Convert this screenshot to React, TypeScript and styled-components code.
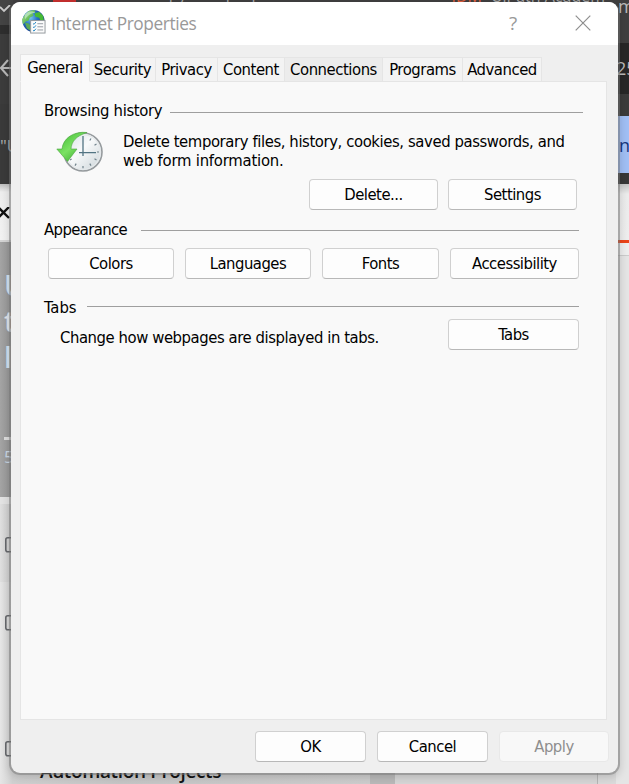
import React from 'react';
import styled, { createGlobalStyle } from 'styled-components';

const GlobalStyle = createGlobalStyle`
  *, *::before, *::after { box-sizing: border-box; }
  body { margin: 0; overflow: hidden; }
`;

const Desktop = styled.div`
  position: relative;
  width: 629px;
  height: 784px;
  overflow: hidden;
  background: #3c3c3c;
  font-family: "DejaVu Sans Condensed", "DejaVu Sans", sans-serif;
`;

/* Browser window visible around the dialog */
const Backdrop = styled.div`
  display: grid;
  grid-template-columns: 13px 1fr 13px;
  height: 784px;
`;

const Strip = styled.div`
  display: flex;
  flex-direction: column;
  overflow: hidden;
`;

const Block = styled.div<{ $h: number; $bg: string; $pad?: string }>`
  flex: none;
  height: ${(p) => p.$h}px;
  padding: ${(p) => p.$pad ?? '0'};
  background: ${(p) => p.$bg};
  overflow: hidden;
  white-space: nowrap;
`;

const Glimpse = styled.div<{ $size: number; $color: string; $bold?: boolean; $line?: number }>`
  font-family: "Open Sans", sans-serif;
  font-size: ${(p) => p.$size}px;
  line-height: ${(p) => p.$line ?? p.$size}px;
  font-weight: ${(p) => (p.$bold ? 600 : 400)};
  color: ${(p) => p.$color};
`;

const Middle = styled.div`
  display: flex;
  flex-direction: column;
  justify-content: space-between;
  overflow: hidden;
`;

const TopSliver = styled.div`
  display: flex;
  height: 10px;
  padding-left: 40px;
  background: #403f40;
  overflow: hidden;
`;

const RedTab = styled.div`
  width: 23px;
  height: 3px;
  background: #c9302f;
`;

const SliverText = styled.div<{ $ml: number; $color: string; $up?: number }>`
  margin: -${(p) => p.$up ?? 15}px 0 0 ${(p) => p.$ml}px;
  font: 16px/18px "Open Sans", sans-serif;
  color: ${(p) => p.$color};
  white-space: nowrap;
`;

const BottomSliver = styled.div`
  display: grid;
  grid-template-columns: 357px 25px 202px 1fr;
  height: 22px;
  overflow: hidden;
  background: #d9d9d9;
`;

const PageText = styled.div`
  padding-left: 27px;
  font: 600 19px/18px "Open Sans", sans-serif;
  letter-spacing: -0.38px;
  color: #141414;
  white-space: nowrap;
  background: linear-gradient(90deg, #d0d0d0, #c6c6c6 30%, #cdcdcd);
`;

const Patch = styled.div<{ $bg: string; $line?: boolean }>`
  background: ${(p) => p.$bg};
  border-left: ${(p) => (p.$line ? '1px solid #b5b5b5' : '0')};
`;

/* Dialog window */
const Dialog = styled.div`
  position: absolute;
  left: 11px;
  top: 2px;
  width: 607px;
  height: 771px;
  display: flex;
  flex-direction: column;
  border-radius: 9px;
  background: #efefef;
  overflow: hidden;
`;

const DialogEdge = styled.div`
  position: absolute;
  left: 9px;
  top: 2px;
  width: 611px;
  height: 773px;
  border-radius: 11px;
  background: rgba(110, 110, 110, 0.55);
  box-shadow: 0 2px 9px rgba(0, 0, 0, 0.16);
`;

const TitleBar = styled.header`
  flex: none;
  display: flex;
  align-items: center;
  height: 43px;
  padding: 0 27px 0 11px;
  background: #fff;
`;

const Title = styled.h1`
  flex: 1;
  margin: 0 0 0 5px;
  font: 400 17.3px/24px "Open Sans", sans-serif;
  letter-spacing: -0.4px;
  color: #999;
  padding-top: 1px;
`;

const HelpButton = styled.button`
  width: 20px;
  margin: 0 52px 2px 0;
  padding: 0;
  border: 0;
  background: none;
  font: 400 19px/24px "Open Sans", sans-serif;
  color: #999;
`;

const CloseButton = styled.button`
  display: flex;
  padding: 0 0 1px;
  border: 0;
  background: none;
`;

const TabList = styled.nav`
  flex: none;
  display: flex;
  align-items: flex-end;
  height: 37px;
  margin: 0 0 -1px 9px;
  z-index: 1;
`;

const Tab = styled.button<{ $w: number; $active?: boolean; $shade?: boolean }>`
  width: ${(p) => p.$w}px;
  height: ${(p) => (p.$active ? 28 : 25)}px;
  padding: ${(p) => (p.$active ? '0' : '1px 0 0')};
  border: 1px solid #e5e5e5;
  border-left-width: ${(p) => (p.$active ? 1 : 0)}px;
  border-bottom-color: ${(p) => (p.$active ? '#f9f9f9' : '#e5e5e5')};
  background: ${(p) => (p.$active ? '#f9f9f9' : p.$shade ? '#ececec' : '#f3f3f3')};
  font: 16.5px/22px "DejaVu Sans Condensed", sans-serif;
  letter-spacing: -0.45px;
  color: #000;
  white-space: nowrap;
`;

const Panel = styled.main`
  flex: none;
  width: 587px;
  height: 639px;
  margin-left: 9px;
  padding: 18px 23px 0;
  border: 1px solid #e5e5e5;
  background: #f9f9f9;
`;

const SectionHead = styled.div<{ $w: number; $right: number; $drop: number }>`
  display: grid;
  grid-template-columns: ${(p) => p.$w}px 1fr;
  height: 22px;
  margin-right: ${(p) => p.$right}px;
  &::after {
    content: '';
    height: 1px;
    margin-top: ${(p) => p.$drop}px;
    background: #9f9f9f;
  }
`;

const Text = styled.span<{ $ls?: number }>`
  font-size: 16.5px;
  line-height: 19px;
  letter-spacing: ${(p) => p.$ls ?? -0.4}px;
  color: #000;
  white-space: pre;
`;

const Heading = styled(Text).attrs({ as: 'h2' })`
  margin: 0;
  padding-top: 1px;
  font-weight: 400;
`;

const HistoryRow = styled.div`
  display: flex;
  height: 57px;
  padding: 9px 0 0 12px;
`;

const HistoryText = styled.div`
  display: flex;
  flex-direction: column;
  margin-left: 18px;
  padding: 1px 0 0 1px;
`;

const HistoryActions = styled.div`
  display: flex;
  gap: 10px;
  height: 40px;
  padding-left: 265px;
`;

const AppearanceActions = styled.div`
  display: flex;
  gap: 11px;
  height: 56px;
  padding: 7px 0 0 4px;
`;

const TabsRow = styled.div`
  display: flex;
  justify-content: space-between;
  width: 535px;
  padding-left: 16px;
`;

const Lowered = styled.div`
  padding-top: 9px;
`;

const Button = styled.button<{ $w: number }>`
  flex: none;
  width: ${(p) => p.$w}px;
  height: 31px;
  padding: 1px 0 0;
  border: 1px solid #d0d0d0;
  border-bottom-color: #b8b8b8;
  border-radius: 4px;
  background: #fdfdfd;
  font: 16.5px/20px "DejaVu Sans Condensed", sans-serif;
  letter-spacing: -0.5px;
  color: #000;
  &:disabled {
    border-color: #e8e8e8;
    background: #f8f8f8;
    color: #8e8e8e;
  }
`;

const Footer = styled.footer`
  display: flex;
  justify-content: flex-end;
  gap: 11px;
  padding: 11px 9px 0 0;
`;

const GlobeSvg = styled.svg`
  flex: none;
  margin-bottom: 4px;
`;

const GlobeIcon = () => (
  <GlobeSvg width="24" height="24" viewBox="0 0 25 25">
    <defs>
      <radialGradient id="sea" cx="35%" cy="35%" r="70%">
        <stop offset="0" stopColor="#79c8ee" />
        <stop offset="0.45" stopColor="#2872c5" />
        <stop offset="1" stopColor="#102f83" />
      </radialGradient>
      <linearGradient id="land" x2="1" y2="1">
        <stop stopColor="#bce79b" /><stop offset="1" stopColor="#239b28" />
      </linearGradient>
    </defs>
    <circle cx="12" cy="11.500" r="11.500" fill="url(#sea)" />
    <path d="M3 5 7 1l6-1 1 2-3 2 1 2-4 2-1 3-3 1-3 3-1-5z" fill="url(#land)" />
    <path d="m14 3 4-1 4 4 1 6-4-1-1-3-4-1-1-3z" fill="#46b936" />
    <path d="m3 13 4 1 3 3-1 5-4-3z" fill="#5aa856" />
    <path d="M3 5c3-4 8-4 11-2-4 0-8 2-11 7z" fill="#d6f1e7" opacity=".55" />
    <rect x="9" y="11" width="15" height="13" fill="#fbfbfb" stroke="#92979c" />
    <path d="M16 14.300h6M16 17.500h6M16 20.800h6" stroke="#9298a0" />
    <path d="m11.500 14 1 1 2-2.500m-3 5 1 1 2-2.500m-3 5 1 1 2-2.500" fill="none" stroke="#2386c6" />
  </GlobeSvg>
);

const HistoryIcon = () => (
  <svg width="48" height="42" viewBox="0 0 48 42">
    <defs>
      <linearGradient id="face" x2="1" y2="1">
        <stop stopColor="#d3dce2" /><stop offset=".45" stopColor="#f8fafb" /><stop offset="1" stopColor="#c9d2d6" />
      </linearGradient>
      <linearGradient id="arrow" x2="0.8" y2="1">
        <stop stopColor="#3bb631" /><stop offset=".55" stopColor="#7be263" /><stop offset="1" stopColor="#36a82e" />
      </linearGradient>
    </defs>
    <circle cx="27" cy="21" r="19" fill="url(#face)" stroke="#969b9e" strokeWidth="1.6" />
    <circle cx="27" cy="21" r="17.4" fill="none" stroke="#e4e8ea" strokeWidth="1.2" />
    <path d="M35 7.5l-1.2 2M40.5 13l-2 1.2M43 21h-2M40.5 29l-2-1.2M35 34.6l-1.2-2M27 37.2v-2.3M19 34.6l1.2-2M14 29l1.6-1" stroke="#71838c" strokeWidth="1.2" />
    <path d="M27 5v20M23 21.6h17" stroke="#527483" strokeWidth="1.3" />
    <path d="M31 1.5C18 0 7 7 6 18H.8L11.5 30.5 21 18h-6C15.5 10.5 20 5 31 1.5z" fill="url(#arrow)" stroke="#4ba53f" strokeWidth=".6" />
  </svg>
);

const CloseIcon = () => (
  <svg width="16" height="16" viewBox="0 0 16 16">
    <path d="m.7.7 14.6 14.6M15.3.7.7 15.3" stroke="#8e8e8e" strokeWidth="1.2" fill="none" />
  </svg>
);

const BackIcon = () => (
  <svg width="12" height="20" viewBox="0 0 12 20">
    <path d="M8 2 1 10l7 8M1 10h11" fill="none" stroke="#b8b8b8" strokeWidth="2" />
  </svg>
);

const ChevronIcon = () => (
  <svg width="12" height="10" viewBox="0 0 12 10">
    <path d="m0 2 4 4 6-6" fill="none" stroke="#ccc" strokeWidth="1.8" />
  </svg>
);

const CrossIcon = () => (
  <svg width="12" height="12" viewBox="0 0 12 12">
    <path d="m-2 0 11 11M9 0-2 11" stroke="#111" strokeWidth="2.4" />
  </svg>
);

const CheckIcon = () => (
  <svg width="13" height="16" viewBox="0 0 13 16">
    <rect x="5.8" y=".8" width="14" height="14" rx="2" fill="none" stroke="#66686c" strokeWidth="1.6" />
  </svg>
);

const tabs = [
  { label: 'General', w: 70, active: true },
  { label: 'Security', w: 66 },
  { label: 'Privacy', w: 62 },
  { label: 'Content', w: 67 },
  { label: 'Connections', w: 98, shade: true },
  { label: 'Programs', w: 80 },
  { label: 'Advanced', w: 79 },
];

export default function App() {
  return (
    <Desktop>
      <GlobalStyle />
      <Backdrop>
        <Strip>
          <Block $h={25} $bg="#444"><ChevronIcon /></Block>
          <Block $h={9} $bg="#2e2e2e" />
          <Block $h={70} $bg="#3c3c3c" $pad="24px 0 0"><BackIcon /></Block>
          <Block $h={80} $bg="#3a3a3a" $pad="32px 0 0"><Glimpse $size={17} $line={20} $color="#aaa">"U</Glimpse></Block>
          <Block $h={56} $bg="linear-gradient(#bdbdbd, #eee 8px, #f2f2f2)" $pad="20px 0 0"><CrossIcon /></Block>
          <Block $h={2} $bg="#d4d4d4" />
          <Block $h={255} $bg="linear-gradient(90deg, #a4a4a4, #949494)" $pad="25px 0 0 4px">
            <Glimpse $size={29} $line={36} $color="#d3e3f1" $bold>U</Glimpse>
            <Glimpse $size={29} $line={36} $color="#e0e5ea" $bold>t</Glimpse>
            <Glimpse $size={29} $line={36} $color="#d3e3f1" $bold>l</Glimpse>
            <Block $h={62} $bg="transparent" />
            <Block $h={3} $bg="#ddd" />
            <Block $h={8} $bg="transparent" />
            <Glimpse $size={17} $color="#cbd8e4">5</Glimpse>
          </Block>
          <Block $h={7} $bg="#e3e3e3" />
          <Block $h={78} $bg="linear-gradient(90deg, #dfdfdf, #c9c9c9)" $pad="33px 0 0"><CheckIcon /></Block>
          <Block $h={202} $bg="linear-gradient(90deg, #e6e6e6, #cfcfcf)" $pad="33px 0 0">
            <CheckIcon />
            <Block $h={106} $bg="transparent" />
            <CheckIcon />
          </Block>
        </Strip>
        <Middle>
          <TopSliver>
            <RedTab />
            <SliverText $ml={50} $color="#aaa">Basic python projec</SliverText>
            <SliverText $ml={126} $color="#bbb">×</SliverText>
            <SliverText $ml={44} $up={13} $color="#e2603c">IDM</SliverText>
            <SliverText $ml={9} $up={13} $color="#aaa">UiPath Academ</SliverText>
          </TopSliver>
          <BottomSliver>
            <PageText>Automation Projects</PageText>
            <Patch $bg="#b9b9b9" />
            <Patch $bg="#d6d6d6" />
            <Patch $bg="#dadada" $line />
          </BottomSliver>
        </Middle>
        <Strip>
          <Block $h={43} $bg="#3f3f3f" $pad="0 0 0 2px"><Glimpse $size={18} $line={12} $color="#bbb">m</Glimpse></Block>
          <Block $h={51} $bg="#272727" $pad="15px 0 0 0">
            <Glimpse $size={18} $line={21} $color="#bbb">25</Glimpse>
          </Block>
          <Block $h={22} $bg="#3b3b3b" />
          <Block $h={57} $bg="#a1bff5" $pad="19px 0 0 3px"><Glimpse $size={18} $line={20} $color="#17377e">n</Glimpse></Block>
          <Block $h={11} $bg="#373737" />
          <Block $h={56} $bg="linear-gradient(#c4c4c4, #ececec 10px, #eee)" />
          <Block $h={3} $bg="#ec4318" />
          <Block $h={12} $bg="#eee" />
          <Block $h={1} $bg="#ccc" />
          <Block $h={528} $bg="#e5e5e5" />
        </Strip>
      </Backdrop>
      <DialogEdge />
      <Dialog>
        <TitleBar>
          <GlobeIcon />
          <Title>Internet Properties</Title>
          <HelpButton>?</HelpButton>
          <CloseButton><CloseIcon /></CloseButton>
        </TitleBar>
        <TabList>
          {tabs.map((t) => (
            <Tab key={t.label} $w={t.w} $active={t.active} $shade={t.shade}>{t.label}</Tab>
          ))}
        </TabList>
        <Panel>
          <SectionHead $w={126} $right={0} $drop={12}><Heading $ls={-0.33}>Browsing history</Heading></SectionHead>
          <HistoryRow>
            <HistoryIcon />
            <HistoryText>
              <Text>Delete temporary files, history, cookies, saved passwords, and</Text>
              <Text $ls={-0.22}>web form information.</Text>
            </HistoryText>
          </HistoryRow>
          <HistoryActions>
            <Button $w={129}>Delete...</Button>
            <Button $w={129}>Settings</Button>
          </HistoryActions>
          <SectionHead $w={97} $right={4} $drop={11}><Heading $ls={-0.6}>Appearance</Heading></SectionHead>
          <AppearanceActions>
            <Button $w={126}>Colors</Button>
            <Button $w={126}>Languages</Button>
            <Button $w={117}>Fonts</Button>
            <Button $w={129}>Accessibility</Button>
          </AppearanceActions>
          <SectionHead $w={43} $right={4} $drop={9}><Heading $ls={0}>Tabs</Heading></SectionHead>
          <TabsRow>
            <Lowered><Text $ls={-0.43}>Change how webpages are displayed in tabs.</Text></Lowered>
            <Button $w={131}>Tabs</Button>
          </TabsRow>
        </Panel>
        <Footer>
          <Button $w={111}>OK</Button>
          <Button $w={111}>Cancel</Button>
          <Button $w={110} disabled>Apply</Button>
        </Footer>
      </Dialog>
    </Desktop>
  );
}
